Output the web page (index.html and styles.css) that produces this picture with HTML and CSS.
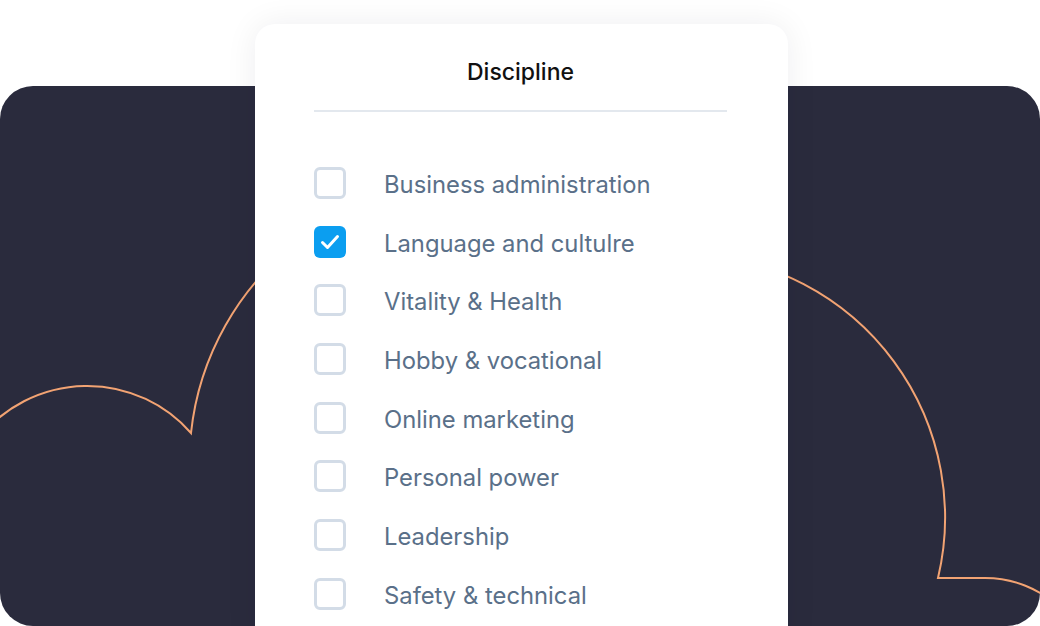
FILE: index.html
```html
<!DOCTYPE html>
<html lang="en">
<head>
  <meta charset="UTF-8">
  <meta name="viewport" content="width=device-width, initial-scale=1.0">
  <title>Discipline filter</title>
  <link rel="stylesheet" href="styles.css">
</head>
<body>
  <div class="stage">
    <div class="backdrop">
      <svg class="cloud" viewBox="0 86 1040 540" width="1040" height="540">
        <path d="M -20 437 A 138 138 0 0 1 191 433 A 279 279 0 0 1 300 240" />
        <path d="M 700 255 A 263 263 0 0 1 938 578 L 985 578 A 108 108 0 0 1 1060 608" />
      </svg>
    </div>

    <div class="card">
      <h2 class="card-title">Discipline</h2>
      <ul class="options">
        <li class="option">
          <span class="box"></span>
          <span class="label">Business administration</span>
        </li>
        <li class="option">
          <span class="box checked">
            <svg viewBox="0 0 32 32" width="32" height="32"><path d="M8.5 16.5 L13.5 21.5 L23.5 10.5" /></svg>
          </span>
          <span class="label">Language and cultulre</span>
        </li>
        <li class="option">
          <span class="box"></span>
          <span class="label">Vitality &amp; Health</span>
        </li>
        <li class="option">
          <span class="box"></span>
          <span class="label">Hobby &amp; vocational</span>
        </li>
        <li class="option">
          <span class="box"></span>
          <span class="label">Online marketing</span>
        </li>
        <li class="option">
          <span class="box"></span>
          <span class="label">Personal power</span>
        </li>
        <li class="option">
          <span class="box"></span>
          <span class="label">Leadership</span>
        </li>
        <li class="option">
          <span class="box"></span>
          <span class="label">Safety &amp; technical</span>
        </li>
      </ul>
    </div>
  </div>
</body>
</html>
```

FILE: styles.css
```css
body {
  margin: 0;
  background-color: #fff;
  font-family: Inter, 'Noto Sans', sans-serif;
}
.stage {
  position: relative;
  width: 1040px;
  height: 626px;
  overflow: hidden;
}
.backdrop {
  position: absolute;
  top: 86px;
  left: 0;
  width: 1040px;
  height: 540px;
  background-color: #2a2b3d;
  border-radius: 33px;
  overflow: hidden;
}
.cloud {
  display: block;
}
.cloud path {
  fill: none;
  stroke: #f2a373;
  stroke-width: 2;
}
.card {
  position: relative;
  width: 413px;
  margin: 24px 0 0 255px;
  padding: 0 61px 40px 59px;
  background-color: #fff;
  border-radius: 20px;
  box-shadow: 0 0 32px rgba(20, 20, 40, 0.07);
}
.card-title {
  margin: 0;
  padding: 33px 0 23px;
  text-align: center;
  font-size: 23px;
  font-weight: 500;
  line-height: 30px;
  color: #111;
  border-bottom: 2px solid #e3e8ee;
}
.options {
  list-style: none;
  margin: 0;
  padding: 55px 0 0;
  display: flex;
  flex-direction: column;
  gap: 26.7px;
}
.option {
  display: flex;
  align-items: center;
  gap: 38px;
  height: 32px;
}
.box {
  box-sizing: border-box;
  width: 32px;
  height: 32px;
  flex: none;
  border: 3px solid #d3dce7;
  border-radius: 6px;
}
.box.checked {
  border: none;
  background-color: #0b9ef0;
}
.box svg {
  display: block;
}
.box svg path {
  fill: none;
  stroke: #fff;
  stroke-width: 3;
  stroke-linecap: round;
  stroke-linejoin: round;
}
.label {
  padding-top: 4px;
  font-size: 23.8px;
  color: #5a7089;
  line-height: 32px;
}
```
